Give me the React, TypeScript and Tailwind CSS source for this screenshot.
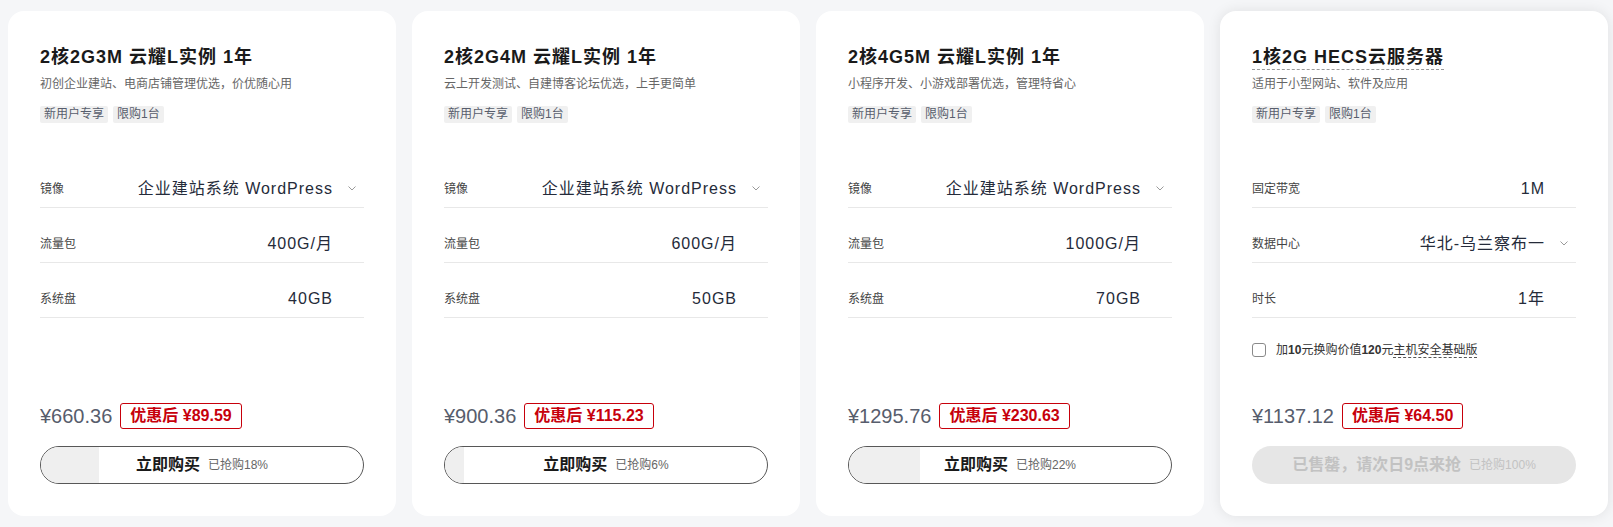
import React from "react";

type Row = { label: string; value: string; select?: boolean };

type Plan = {
  title: string;
  desc: string;
  rows: Row[];
  price: string;
  deal: string;
  sold: number;
  dashedTitle?: boolean;
  addon?: boolean;
  soldOut?: boolean;
};

const plans: Plan[] = [
  {
    title: "2核2G3M 云耀L实例 1年",
    desc: "初创企业建站、电商店铺管理优选，价优随心用",
    rows: [
      { label: "镜像", value: "企业建站系统 WordPress", select: true },
      { label: "流量包", value: "400G/月" },
      { label: "系统盘", value: "40GB" },
    ],
    price: "¥660.36",
    deal: "¥89.59",
    sold: 18,
  },
  {
    title: "2核2G4M 云耀L实例 1年",
    desc: "云上开发测试、自建博客论坛优选，上手更简单",
    rows: [
      { label: "镜像", value: "企业建站系统 WordPress", select: true },
      { label: "流量包", value: "600G/月" },
      { label: "系统盘", value: "50GB" },
    ],
    price: "¥900.36",
    deal: "¥115.23",
    sold: 6,
  },
  {
    title: "2核4G5M 云耀L实例 1年",
    desc: "小程序开发、小游戏部署优选，管理特省心",
    rows: [
      { label: "镜像", value: "企业建站系统 WordPress", select: true },
      { label: "流量包", value: "1000G/月" },
      { label: "系统盘", value: "70GB" },
    ],
    price: "¥1295.76",
    deal: "¥230.63",
    sold: 22,
  },
  {
    title: "1核2G HECS云服务器",
    desc: "适用于小型网站、软件及应用",
    rows: [
      { label: "固定带宽", value: "1M" },
      { label: "数据中心", value: "华北-乌兰察布一", select: true },
      { label: "时长", value: "1年" },
    ],
    price: "¥1137.12",
    deal: "¥64.50",
    sold: 100,
    dashedTitle: true,
    addon: true,
    soldOut: true,
  },
];

const Chevron = () => (
  <svg width="8" height="5" viewBox="0 0 8 5" fill="none">
    <path d="M0.5 0.5 L4 4 L7.5 0.5" stroke="#9a9a9a" strokeWidth="1" />
  </svg>
);

const Card = ({ plan }: { plan: Plan }) => {
  return (
    <div
      className={`flex flex-col w-[388px] h-[505px] shrink-0 rounded-2xl bg-white px-8 pt-[34px] pb-8 ${
        plan.soldOut ? "shadow-[0_0_14px_rgba(0,0,0,0.09)]" : ""
      }`}
    >
      <div>
        <h3
          className={`inline-block text-[18px] leading-6 font-bold tracking-[1px] text-[#1a1a1a] ${
            plan.dashedTitle ? "border-b border-dashed border-[#9a9a9a]" : ""
          }`}
        >
          {plan.title}
        </h3>
      </div>
      <p className="mt-[6px] text-[12px] leading-4 text-[#666]">{plan.desc}</p>
      <div className="mt-[14px] flex gap-[5px]">
        <span className="rounded-[2px] bg-[#f0f0f0] px-1 text-[12px] leading-[17px] text-[#575d6c]">新用户专享</span>
        <span className="rounded-[2px] bg-[#f0f0f0] px-1 text-[12px] leading-[17px] text-[#575d6c]">限购1台</span>
      </div>

      <div className="mt-[30px] flex flex-col">
        {plan.rows.map((r) => (
          <div key={r.label} className="mt-[17px] flex h-[38px] items-center border-b border-[#e8e8e8]">
            <span className="w-20 text-[12px] text-[#444]">{r.label}</span>
            <span className="flex-1 text-right text-[16px] tracking-[1px] text-[#252b3a]">{r.value}</span>
            <span className="flex w-[31px] justify-end pr-[8px]">{r.select && <Chevron />}</span>
          </div>
        ))}
      </div>

      {plan.addon && (
        <label className="mt-[23px] flex items-center gap-[10px] text-[12px] text-[#333]">
          <span className="h-[14px] w-[14px] rounded-[3px] border border-[#8a8a8a] bg-white" />
          <span>
            加<b>10</b>元换购价值<b>120</b>元
            <span className="border-b border-dashed border-[#555]">主机安全基础版</span>
          </span>
        </label>
      )}

      <div className="mt-auto flex items-center gap-2">
        <span className="text-[20px] leading-[26px] text-[#575d6c]">{plan.price}</span>
        <span className="rounded-[3px] border border-[#c7000b] px-[9px] text-[16px] leading-[24px] font-bold text-[#c7000b]">
          优惠后 {plan.deal}
        </span>
      </div>

      {plan.soldOut ? (
        <div className="mt-[17px] flex h-[38px] items-center justify-center gap-2 rounded-full bg-[#e6e6e6]">
          <span className="text-[16px] font-bold text-[#c2c2c2]">已售罄，请次日9点来抢</span>
          <span className="text-[12px] text-[#c2c2c2]">已抢购{plan.sold}%</span>
        </div>
      ) : (
        <div className="relative mt-[17px] flex h-[38px] items-center justify-center gap-2 overflow-hidden rounded-full border border-[#575757]">
          <div className="absolute left-0 top-0 h-full bg-[#efefef]" style={{ width: `${plan.sold}%` }} />
          <span className="relative text-[16px] font-bold text-[#1a1a1a]">立即购买</span>
          <span className="relative text-[12px] text-[#666]">已抢购{plan.sold}%</span>
        </div>
      )}
    </div>
  );
};

export default function App() {
  return (
    <div
      className="flex h-[527px] w-full gap-4 bg-[#f5f6f8] pl-2 pt-[11px]"
      style={{ fontFamily: '"Liberation Sans", "Noto Sans CJK SC", sans-serif' }}
    >
      {plans.map((p) => (
        <Card key={p.title} plan={p} />
      ))}
    </div>
  );
}
